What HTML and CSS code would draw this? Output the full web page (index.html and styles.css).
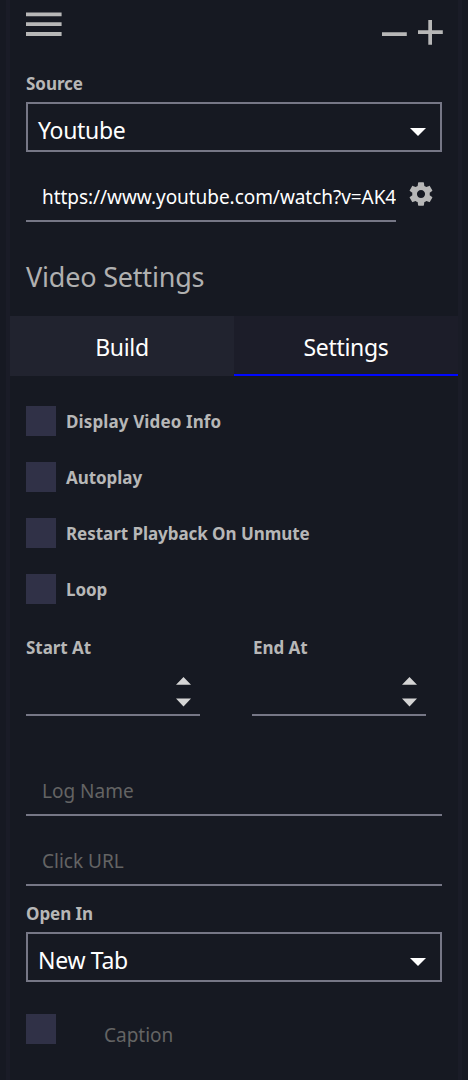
FILE: index.html
```html
<!DOCTYPE html>
<html lang="en">
<head>
    <meta charset="UTF-8">
    <title>Video Settings</title>

    <link rel="stylesheet" href="styles.css">
</head>

<body>

    <div class="panel">
        <div class="toolbar">
            <svg class="menu" width="36" height="24" viewBox="0 0 36 24">
                <path d="M0 .4h35.6v3.8H0zM0 10.2h35.6v3.8H0zM0 20.1h35.6v3.8H0z"/>
            </svg>
            <svg class="zoom" width="62" height="26" viewBox="0 0 62 26">
                <path d="M0 12.2h24.8v3.7H0zM36 10.2h24.8v3.7H36zM46.3 0H50v24.8h-3.7z"/>
            </svg>
        </div>

        <label class="label">Source</label>
        <div class="select">
            <span>Youtube</span>
            <svg width="16" height="8" viewBox="0 0 16 8"><path d="M0 0h16L8 8z"/></svg>
        </div>

        <div class="source-row">
            <input type="text" class="text url" value="https://www.youtube.com/watch?v=AK4">
            <svg class="gear" width="28" height="28" viewBox="0 0 24 24">
                <path d="M19.43 12.98c.04-.32.07-.64.07-.98s-.03-.66-.07-.98l2.11-1.65c.19-.15.24-.42.12-.64l-2-3.46c-.12-.22-.39-.3-.61-.22l-2.49 1c-.52-.4-1.08-.73-1.69-.98l-.38-2.65C14.46 2.18 14.25 2 14 2h-4c-.25 0-.46.18-.49.42l-.38 2.65c-.61.25-1.17.59-1.69.98l-2.49-1c-.23-.09-.49 0-.61.22l-2 3.46c-.13.22-.07.49.12.64l2.11 1.65c-.04.32-.07.65-.07.98s.03.66.07.98l-2.11 1.65c-.19.15-.24.42-.12.64l2 3.46c.12.22.39.3.61.22l2.49-1c.52.4 1.08.73 1.69.98l.38 2.65c.03.24.24.42.49.42h4c.25 0 .46-.18.49-.42l.38-2.65c.61-.25 1.17-.59 1.69-.98l2.49 1c.23.09.49 0 .61-.22l2-3.46c.12-.22.07-.49-.12-.64l-2.11-1.65zM12 15.5c-1.93 0-3.5-1.57-3.5-3.5s1.57-3.5 3.5-3.5 3.5 1.57 3.5 3.5-1.57 3.5-3.5 3.5z"/>
            </svg>
        </div>

        <h1>Video Settings</h1>

        <div class="tabs">
            <div class="tab">Build</div>
            <div class="tab active">Settings</div>
        </div>

        <div class="checks">
            <div class="check"><span class="box"></span><span class="label info">Display Video Info</span></div>
            <div class="check"><span class="box"></span><span class="label">Autoplay</span></div>
            <div class="check"><span class="box"></span><span class="label">Restart Playback On Unmute</span></div>
            <div class="check"><span class="box"></span><span class="label">Loop</span></div>
        </div>

        <div class="times">
            <div class="time">
                <label class="label">Start At</label>
                <div class="number">
                    <svg width="15" height="30" viewBox="0 0 15 30"><path d="M0 7.8h15L7.5 0zM0 21.6h15L7.5 29.4z"/></svg>
                </div>
            </div>
            <div class="time">
                <label class="label end">End At</label>
                <div class="number">
                    <svg width="15" height="30" viewBox="0 0 15 30"><path d="M0 7.8h15L7.5 0zM0 21.6h15L7.5 29.4z"/></svg>
                </div>
            </div>
        </div>

        <input type="text" class="text log" placeholder="Log Name">
        <input type="text" class="text click" placeholder="Click URL">

        <label class="label open">Open In</label>
        <div class="select">
            <span>New Tab</span>
            <svg width="16" height="8" viewBox="0 0 16 8"><path d="M0 0h16L8 8z"/></svg>
        </div>

        <div class="caption-row">
            <span class="box"></span>
            <input type="text" class="caption" placeholder="Caption">
        </div>
    </div>

</body>
</html>
```
FILE: styles.css
```css
* {
    box-sizing: border-box;
}
body {
    margin: 0;
    background-color: #161922;
    font-family: "Noto Sans", "Open Sans", sans-serif;
    color: #fff;
    overflow: hidden;
}
svg {
    display: block;
    flex: none;
    fill: #b7b7b7;
}
.panel {
    width: 456px;
    height: 1080px;
    margin-left: 6px;
    padding: 0 16px;
    border-left: 4px solid #1a1c27;
    border-right: 4px solid #1a1c27;
    overflow: hidden;
}
.toolbar {
    display: flex;
    justify-content: space-between;
    align-items: flex-start;
    height: 72px;
    padding-top: 12px;
}
.zoom {
    margin-top: 8px;
    margin-right: -2px;
}
.label {
    display: block;
    height: 30px;
    line-height: 24px;
    font-size: 17px;
    font-weight: bold;
    letter-spacing: -0.05px;
    color: #b7b7b7;
    white-space: nowrap;
}
.label.info {
    letter-spacing: 0.12px;
}
.label.end {
    padding-left: 1px;
}
.select {
    display: flex;
    justify-content: space-between;
    align-items: center;
    height: 50px;
    padding: 5px 14px 0 10px;
    border: 2px solid #767786;
    font-size: 23px;
    line-height: 30px;
    letter-spacing: -0.3px;
}
.select span {
    padding-top: 1px;
}
.select svg {
    margin-top: 4px;
    fill: #fff;
}
.source-row {
    display: flex;
    justify-content: space-between;
    height: 90px;
    padding: 20px 7px 0 0;
}
.text {
    display: block;
    width: 100%;
    height: 50px;
    padding: 2px 0 0 16px;
    border: none;
    border-bottom: 2px solid #767786;
    outline: none;
    background: none;
    color: #fff;
    font-family: inherit;
    font-size: 19px;
}
.text::placeholder, .caption::placeholder {
    color: #646464;
    opacity: 1;
}
.text.url {
    width: 370px;
    letter-spacing: -0.05px;
}
.gear {
    margin-top: 8px;
}
h1 {
    height: 74px;
    margin: 0;
    padding-top: 16px;
    font-size: 27px;
    line-height: 37px;
    font-weight: normal;
    letter-spacing: -0.2px;
    color: #b0b0b0;
}
.tabs {
    display: flex;
    height: 60px;
    margin: 0 -16px;
}
.tab {
    flex: 1;
    padding-top: 1px;
    background-color: #21232f;
    font-size: 23px;
    line-height: 60px;
    letter-spacing: -0.3px;
    text-align: center;
}
.tab.active {
    background-color: #1c1d29;
    border-bottom: 2px solid #0008ff;
}
.checks {
    display: flex;
    flex-direction: column;
    gap: 26px;
    padding-top: 30px;
}
.check {
    display: flex;
    gap: 10px;
}
.check .label {
    line-height: 31px;
}
.box {
    flex: none;
    width: 30px;
    height: 30px;
    background-color: #303147;
}
.times {
    display: flex;
    gap: 52px;
    padding-top: 32px;
}
.time {
    width: 174px;
}
.number {
    display: flex;
    justify-content: flex-end;
    height: 50px;
    padding: 11px 9px 0 0;
    border-bottom: 2px solid #767786;
}
.number svg {
    fill: #d5d5d5;
}
.text.log {
    margin-top: 50px;
}
.text.click {
    margin-top: 20px;
}
.label.open {
    height: 46px;
    padding-top: 16px;
}
.caption-row {
    display: flex;
    padding-top: 32px;
}
.caption {
    width: 300px;
    height: 42px;
    margin-left: 48px;
    padding: 0;
    border: none;
    outline: none;
    background: none;
    font-family: inherit;
    font-size: 19px;
}
```
